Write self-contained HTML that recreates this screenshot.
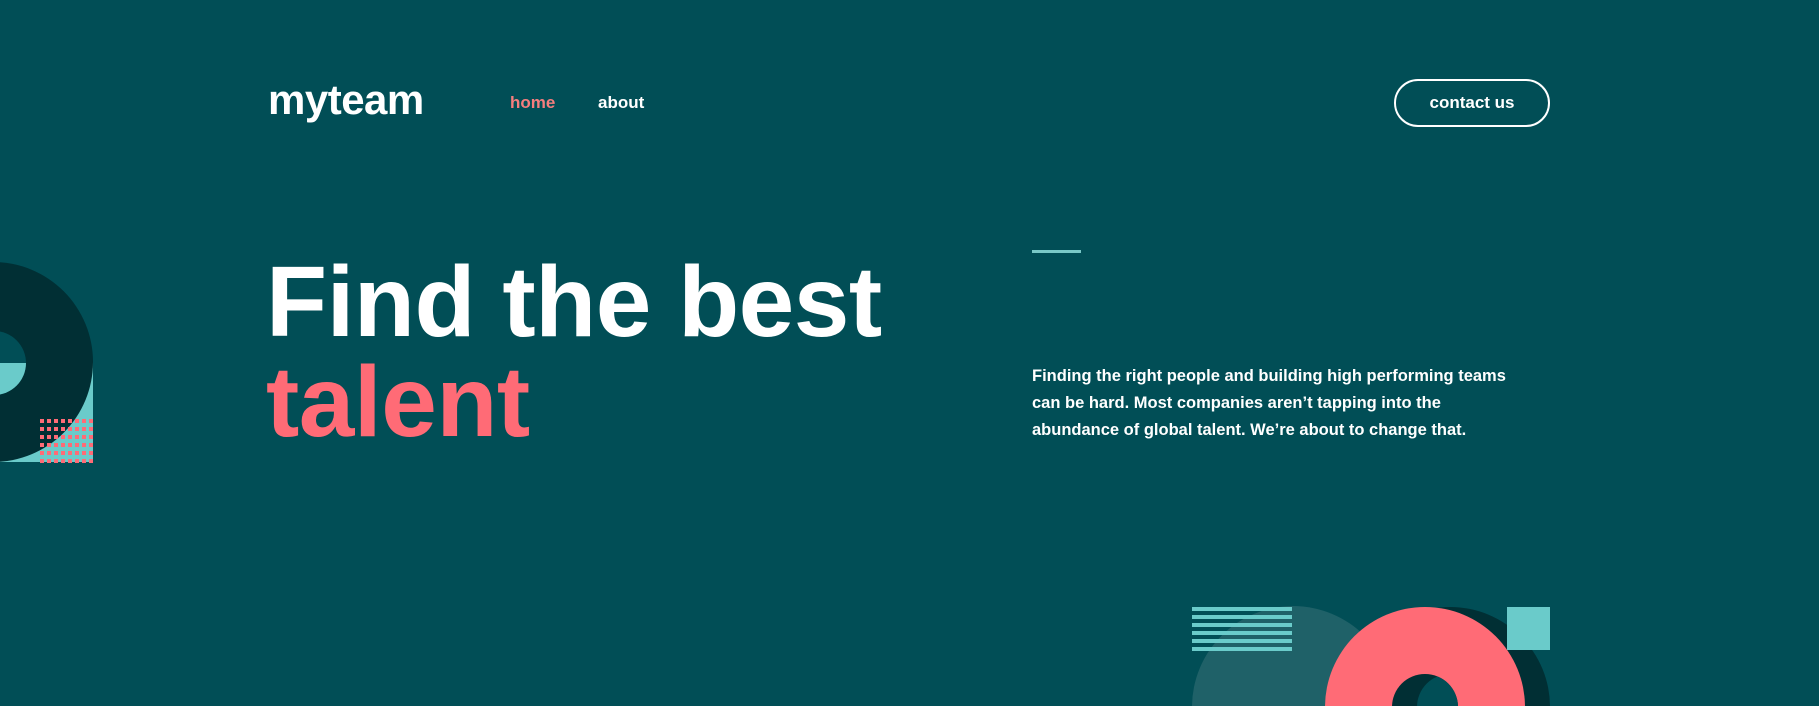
<!DOCTYPE html>
<html style="overflow:hidden"><head><style>
*{margin:0;padding:0;box-sizing:border-box}
html,body{width:1819px;height:706px;overflow:hidden}
body{background:#014e56;position:relative;font-family:"Liberation Sans",sans-serif;color:#fff}
.a{position:absolute}
</style></head><body>
<div class="a" style="left:268px;top:76px;font-size:42px;font-weight:bold;letter-spacing:-0.5px">myteam</div>
<div class="a" style="left:510px;top:93px;font-size:17px;font-weight:bold;color:#f67e7e">home</div>
<div class="a" style="left:598px;top:93px;font-size:17px;font-weight:bold">about</div>
<div class="a" style="left:1394px;top:79px;width:156px;height:48px;border:2px solid #fff;border-radius:24px;font-size:17px;font-weight:bold;text-align:center;line-height:44px">contact us</div>
<div class="a" style="left:266px;top:252px;font-size:100px;font-weight:bold;line-height:100px;letter-spacing:-0.5px">Find the best<br><span style="color:#ff6b76">talent</span></div>
<div class="a" style="left:1032px;top:250px;width:49px;height:3px;background:#79c8c7"></div>
<div class="a" style="left:1032px;top:363px;font-size:16.5px;font-weight:bold;line-height:27px">Finding the right people and building high performing teams<br>can be hard. Most companies aren’t tapping into the<br>abundance of global talent. We’re about to change that.</div>
<svg class="a" style="left:0;top:0;display:block" width="1819" height="706">
<defs>
<pattern id="p" x="40" y="419" width="7" height="8" patternUnits="userSpaceOnUse"><rect width="4" height="4" fill="#ff6b76"/></pattern>
<clipPath id="c"><circle cx="1425" cy="707" r="33"/></clipPath>
</defs>
<rect x="-7" y="362" width="100" height="100" fill="#6acbca"/>
<circle cx="-7" cy="362" r="100" fill="#012f34"/>
<circle cx="-6" cy="363" r="32" fill="#014e56"/>
<path d="M-38 363 A32 32 0 0 0 26 363 Z" fill="#6acbca"/>
<rect x="40" y="419" width="53" height="44" fill="url(#p)"/>
<circle cx="1293" cy="707" r="101" fill="#1f6168"/>
<g fill="#6acbca"><rect x="1192" y="607" width="100" height="4"/><rect x="1192" y="615" width="100" height="4"/><rect x="1192" y="623" width="100" height="4"/><rect x="1192" y="631" width="100" height="4"/><rect x="1192" y="639" width="100" height="4"/><rect x="1192" y="647" width="100" height="4"/></g>
<circle cx="1450" cy="707" r="100" fill="#012f34"/>
<circle cx="1425" cy="707" r="100" fill="#ff6b76"/>
<circle cx="1425" cy="707" r="33" fill="#012f34"/>
<circle cx="1450" cy="707" r="33" fill="#014e56" clip-path="url(#c)"/>
<rect x="1507" y="607" width="43" height="43" fill="#6acbca"/>
</svg>
</body></html>
